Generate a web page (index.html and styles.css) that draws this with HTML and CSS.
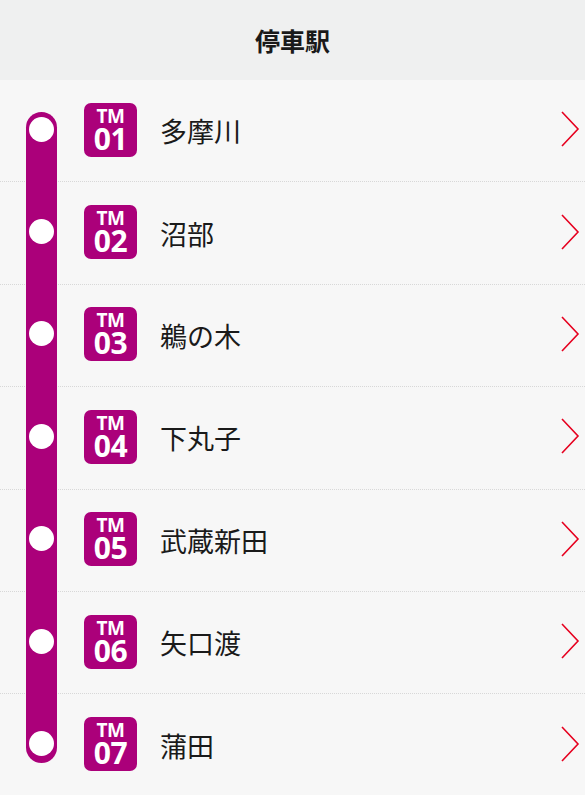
FILE: index.html
```html
<!DOCTYPE html>
<html lang="ja">
<head>
    <meta charset="UTF-8">
    <meta name="viewport" content="width=device-width, initial-scale=1.0">
    <title>停車駅</title>
    <link rel="stylesheet" href="styles.css">
</head>
<body>

<header class="title-bar">
    <h1>停車駅</h1>
</header>

<ul class="stations">
    <li class="rail"></li>
    <li class="station">
        <span class="stop"><span class="dot"></span></span>
        <span class="badge"><span class="line">TM</span><span class="num">01</span></span>
        <span class="name">多摩川</span>
        <svg class="chevron" width="20" height="36" viewBox="0 0 20 36"><path d="M2 1 L18 18 L2 35" fill="none" stroke="#e6001f" stroke-width="1.6"/></svg>
    </li>
    <li class="station">
        <span class="stop"><span class="dot"></span></span>
        <span class="badge"><span class="line">TM</span><span class="num">02</span></span>
        <span class="name">沼部</span>
        <svg class="chevron" width="20" height="36" viewBox="0 0 20 36"><path d="M2 1 L18 18 L2 35" fill="none" stroke="#e6001f" stroke-width="1.6"/></svg>
    </li>
    <li class="station">
        <span class="stop"><span class="dot"></span></span>
        <span class="badge"><span class="line">TM</span><span class="num">03</span></span>
        <span class="name">鵜の木</span>
        <svg class="chevron" width="20" height="36" viewBox="0 0 20 36"><path d="M2 1 L18 18 L2 35" fill="none" stroke="#e6001f" stroke-width="1.6"/></svg>
    </li>
    <li class="station">
        <span class="stop"><span class="dot"></span></span>
        <span class="badge"><span class="line">TM</span><span class="num">04</span></span>
        <span class="name">下丸子</span>
        <svg class="chevron" width="20" height="36" viewBox="0 0 20 36"><path d="M2 1 L18 18 L2 35" fill="none" stroke="#e6001f" stroke-width="1.6"/></svg>
    </li>
    <li class="station">
        <span class="stop"><span class="dot"></span></span>
        <span class="badge"><span class="line">TM</span><span class="num">05</span></span>
        <span class="name">武蔵新田</span>
        <svg class="chevron" width="20" height="36" viewBox="0 0 20 36"><path d="M2 1 L18 18 L2 35" fill="none" stroke="#e6001f" stroke-width="1.6"/></svg>
    </li>
    <li class="station">
        <span class="stop"><span class="dot"></span></span>
        <span class="badge"><span class="line">TM</span><span class="num">06</span></span>
        <span class="name">矢口渡</span>
        <svg class="chevron" width="20" height="36" viewBox="0 0 20 36"><path d="M2 1 L18 18 L2 35" fill="none" stroke="#e6001f" stroke-width="1.6"/></svg>
    </li>
    <li class="station">
        <span class="stop"><span class="dot"></span></span>
        <span class="badge"><span class="line">TM</span><span class="num">07</span></span>
        <span class="name">蒲田</span>
        <svg class="chevron" width="20" height="36" viewBox="0 0 20 36"><path d="M2 1 L18 18 L2 35" fill="none" stroke="#e6001f" stroke-width="1.6"/></svg>
    </li>
</ul>

</body>
</html>
```

FILE: styles.css
```css
body {
    margin: 0;
    padding: 0;
    background-color: #f7f7f7;
    font-family: "Noto Sans CJK JP", "Noto Sans", sans-serif;
    color: #1a1a1a;
    overflow: hidden;
}
.title-bar {
    height: 80px;
    background-color: #eff0f0;
    display: flex;
    align-items: center;
    justify-content: center;
}
.title-bar h1 {
    margin: 0;
    font-size: 25px;
    font-weight: bold;
    color: #1a1a1a;
}
.stations {
    list-style: none;
    margin: 0;
    padding: 0;
    position: relative;
}
/* purple line drawn over the row separators */
.rail {
    position: absolute;
    left: 26px;
    top: 32px;
    width: 31px;
    height: 651px;
    background-color: #ab007a;
    border-radius: 16px;
    z-index: 1;
}
.station {
    height: 101.4px;
    border-bottom: 1px dotted #d8d8d8;
    display: flex;
    align-items: center;
}
.stop {
    width: 31px;
    margin-left: 26px;
    display: flex;
    justify-content: center;
    position: relative;
    z-index: 2;
    margin-top: -3px;
}
.dot {
    width: 25px;
    height: 25px;
    border-radius: 50%;
    background-color: #fff;
}
.badge {
    width: 53px;
    height: 54px;
    box-sizing: border-box;
    padding-top: 4px;
    margin-left: 27px;
    margin-top: -2px;
    background-color: #ab007a;
    border-radius: 7px;
    color: #fff;
    font-family: "Open Sans", sans-serif;
    font-weight: bold;
    display: flex;
    flex-direction: column;
    align-items: center;
}
.badge .line {
    font-size: 19px;
    line-height: 18px;
    letter-spacing: -0.5px;
}
.badge .num {
    font-size: 30px;
    line-height: 28px;
    letter-spacing: -0.5px;
}
.name {
    margin-left: 23px;
    font-size: 27px;
    flex: 1;
}
.chevron {
    margin-right: 5px;
    margin-top: -3px;
}
```
